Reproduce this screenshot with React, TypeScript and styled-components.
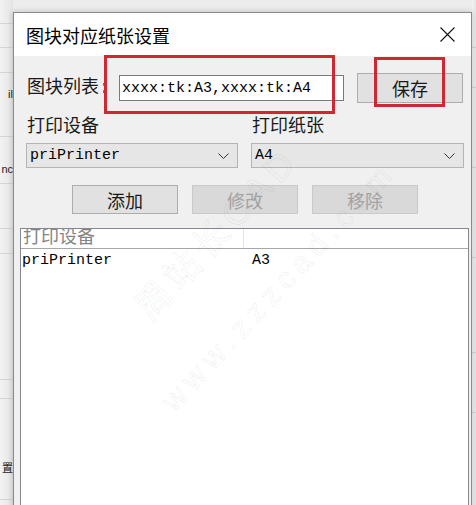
import React from "react";
import styled, { createGlobalStyle } from "styled-components";

const Global = createGlobalStyle`
  html, body { margin: 0; padding: 0; }
  body { width: 476px; height: 505px; overflow: hidden; background: #ececec; }
`;

const CJK = `"Noto Sans CJK SC", "Noto Sans", sans-serif`;
const MIXED = `"Liberation Mono", "Noto Sans CJK SC", monospace`;

const Screen = styled.div`
  display: flex;
  width: 476px;
  height: 505px;
  overflow: hidden;
  background: #ececec;
`;

const BackStrip = styled.div<{ $w: number }>`
  flex: 0 0 ${(p) => p.$w}px;
  display: flex;
  flex-direction: column;
  overflow: hidden;
  background: linear-gradient(to right, #f3f3f3, #e4e4e4);
`;

const StripCell = styled.div<{ $h: number; $line?: boolean }>`
  flex: 0 0 ${(p) => p.$h}px;
  box-sizing: border-box;
  border-bottom: ${(p) => (p.$line ? "1px solid #d4d4d4" : "none")};
  display: flex;
  justify-content: flex-end;
  align-items: center;
  overflow: hidden;
  white-space: nowrap;
  font-family: "Liberation Sans", "Noto Sans CJK SC", sans-serif;
  font-size: 11px;
  line-height: 14px;
  color: #222;
`;

const Dialog = styled.div`
  position: relative;
  flex: 0 0 459px;
  align-self: flex-start;
  margin-top: 12px;
  height: 500px;
  box-sizing: border-box;
  border: 1px solid #8a8a8a;
  background: #f0f0f0;
  display: flex;
  flex-direction: column;
  box-shadow: 0 0 6px rgba(0, 0, 0, 0.2);
`;

const TitleBar = styled.div`
  flex: 0 0 43px;
  background: #ffffff;
  display: flex;
  align-items: center;
  justify-content: space-between;
  padding: 0 16px 0 12px;
`;

const Title = styled.div`
  font-family: ${CJK};
  font-size: 18px;
  line-height: 22px;
  color: #000;
`;

const CloseIcon = styled.svg`
  width: 15px;
  height: 15px;
  display: block;
`;

const Form = styled.div`
  display: flex;
  flex-direction: column;
  padding: 17px 7px 0 12px;
`;

const TopRow = styled.div`
  display: flex;
  align-items: center;
  height: 30px;
  padding-left: 1px;
`;

const FieldLabel = styled.div<{ $w?: number }>`
  ${(p) => (p.$w ? `flex: 0 0 ${p.$w}px;` : "")}
  font-family: ${MIXED};
  font-size: 18px;
  line-height: 20px;
  color: #1a1a1a;
  white-space: nowrap;
`;

const TextBox = styled.div`
  flex: 0 0 225px;
  height: 26px;
  box-sizing: border-box;
  border: 1px solid #7a7a7a;
  background: #fff;
  padding-left: 2px;
  display: flex;
  align-items: center;
  font-family: ${MIXED};
  font-size: 15px;
  color: #000;
  white-space: nowrap;
  overflow: hidden;
`;

const Button = styled.div<{ $disabled?: boolean; $h?: number }>`
  flex: 0 0 106px;
  height: ${(p) => p.$h ?? 29}px;
  box-sizing: border-box;
  border: 1px solid ${(p) => (p.$disabled ? "#c9c9c9" : "#adadad")};
  background: ${(p) => (p.$disabled ? "#d9d9d9" : "#e1e1e1")};
  color: ${(p) => (p.$disabled ? "#a3a3a3" : "#1a1a1a")};
  display: flex;
  align-items: center;
  justify-content: center;
  font-family: ${CJK};
  font-size: 18px;
  line-height: 20px;
`;

const SaveButton = styled(Button)`
  margin-left: 13px;
`;

const Grid2 = styled.div<{ $mt: number; $h: number }>`
  display: grid;
  grid-template-columns: 212px 213px;
  column-gap: 13px;
  margin-top: ${(p) => p.$mt}px;
  height: ${(p) => p.$h}px;
`;

const GridLabel = styled(FieldLabel)`
  padding-left: 1px;
`;

const Combo = styled.div`
  box-sizing: border-box;
  border: 1px solid #b4b4b4;
  background: #e6e6e6;
  display: flex;
  align-items: center;
  justify-content: space-between;
  padding: 0 8px 0 3px;
  font-family: ${MIXED};
  font-size: 15px;
  color: #000;
`;

const Chevron = styled.svg`
  width: 11px;
  height: 6px;
  display: block;
`;

const ButtonRow = styled.div`
  display: flex;
  gap: 14px;
  margin-top: 17px;
  padding-left: 46px;
`;

const ListView = styled.div`
  flex: 1;
  margin: 14px 2px 0 6px;
  box-sizing: border-box;
  border: 1px solid #828790;
  background: #fff;
  display: flex;
  flex-direction: column;
`;

const ListRow = styled.div<{ $header?: boolean }>`
  display: grid;
  grid-template-columns: 223px 1fr;
  height: ${(p) => (p.$header ? 19 : 20)}px;
  border-bottom: ${(p) => (p.$header ? "1px solid #a7a7a7" : "none")};
  font-family: ${MIXED};
  font-size: ${(p) => (p.$header ? 18 : 15)}px;
  line-height: ${(p) => (p.$header ? 19 : 20)}px;
  color: ${(p) => (p.$header ? "#858585" : "#000")};
  margin-top: ${(p) => (p.$header ? 0 : 2)}px;
`;

const ListCell = styled.div<{ $pad: number; $divider?: boolean }>`
  padding-left: ${(p) => p.$pad}px;
  border-right: ${(p) => (p.$divider ? "1px solid #e3e3e3" : "none")};
  white-space: nowrap;
  overflow: hidden;
`;

const RedBox = styled.div<{ $x: number; $y: number; $w: number; $h: number }>`
  position: absolute;
  left: ${(p) => p.$x}px;
  top: ${(p) => p.$y}px;
  width: ${(p) => p.$w}px;
  height: ${(p) => p.$h}px;
  box-sizing: border-box;
  border: 3px solid #cf2734;
  pointer-events: none;
`;

const Watermark = styled.div<{ $x: number; $y: number; $size: number; $sp: number }>`
  position: absolute;
  left: ${(p) => p.$x}px;
  top: ${(p) => p.$y}px;
  transform: translate(-50%, -50%) rotate(-47deg);
  font-family: "Liberation Sans", "Noto Sans CJK SC", sans-serif;
  font-size: ${(p) => p.$size}px;
  letter-spacing: ${(p) => p.$sp}px;
  white-space: nowrap;
  color: rgba(0, 0, 0, 0.01);
  -webkit-text-stroke: 1px rgba(0, 0, 0, 0.065);
  pointer-events: none;
`;

const leftCells: { h: number; line?: boolean; text?: string }[] = [
  { h: 24, line: true },
  { h: 24, line: true },
  { h: 25, line: true },
  { h: 12 },
  { h: 17, text: "il" },
  { h: 35, line: true },
  { h: 22 },
  { h: 20, text: "nc" },
  { h: 5, line: true },
  { h: 45, line: true },
  { h: 25, line: true },
  { h: 126, line: true },
  { h: 19, line: true },
  { h: 56 },
  { h: 25, text: "置" },
  { h: 20, line: true },
  { h: 30 },
];

const rightCells: { h: number; line?: boolean }[] = [
  { h: 48, line: true },
  { h: 40, line: true },
  { h: 80, line: true },
  { h: 90, line: true },
  { h: 95, line: true },
  { h: 60, line: true },
  { h: 92 },
];

const Combobox = ({ value }: { value: string }) => (
  <Combo>
    <span>{value}</span>
    <Chevron viewBox="0 0 11 6">
      <polyline points="0.5,0.5 5.5,5.5 10.5,0.5" fill="none" stroke="#333" strokeWidth="1" />
    </Chevron>
  </Combo>
);

export default function App() {
  return (
    <>
      <Global />
      <Screen>
        <BackStrip $w={13}>
          {leftCells.map((c, i) => (
            <StripCell key={i} $h={c.h} $line={c.line}>
              {c.text}
            </StripCell>
          ))}
        </BackStrip>
        <Dialog>
          <TitleBar>
            <Title>图块对应纸张设置</Title>
            <CloseIcon viewBox="0 0 15 15">
              <path d="M0.5 0.5 L14.5 14.5 M14.5 0.5 L0.5 14.5" stroke="#111" strokeWidth="1.1" fill="none" />
            </CloseIcon>
          </TitleBar>
          <Form>
            <TopRow>
              <FieldLabel $w={92}>图块列表:</FieldLabel>
              <TextBox>xxxx:tk:A3,xxxx:tk:A4</TextBox>
              <SaveButton $h={30}>保存</SaveButton>
            </TopRow>
            <Grid2 $mt={14} $h={20}>
              <GridLabel>打印设备</GridLabel>
              <GridLabel>打印纸张</GridLabel>
            </Grid2>
            <Grid2 $mt={6} $h={25}>
              <Combobox value="priPrinter" />
              <Combobox value="A4" />
            </Grid2>
            <ButtonRow>
              <Button>添加</Button>
              <Button $disabled>修改</Button>
              <Button $disabled>移除</Button>
            </ButtonRow>
          </Form>
          <ListView>
            <ListRow $header>
              <ListCell $pad={2} $divider>打印设备</ListCell>
              <ListCell $pad={0} />
            </ListRow>
            <ListRow>
              <ListCell $pad={1}>priPrinter</ListCell>
              <ListCell $pad={8}>A3</ListCell>
            </ListRow>
          </ListView>
          <Watermark $x={200} $y={218} $size={36} $sp={6}>
            周站长CAD
          </Watermark>
          <Watermark $x={265} $y={273} $size={30} $sp={7}>
            www.zzzcad.com
          </Watermark>
          <RedBox $x={90} $y={42} $w={231} $h={59} />
          <RedBox $x={360} $y={44} $w={71} $h={50} />
        </Dialog>
        <BackStrip $w={4}>
          {rightCells.map((c, i) => (
            <StripCell key={i} $h={c.h} $line={c.line} />
          ))}
        </BackStrip>
      </Screen>
    </>
  );
}
